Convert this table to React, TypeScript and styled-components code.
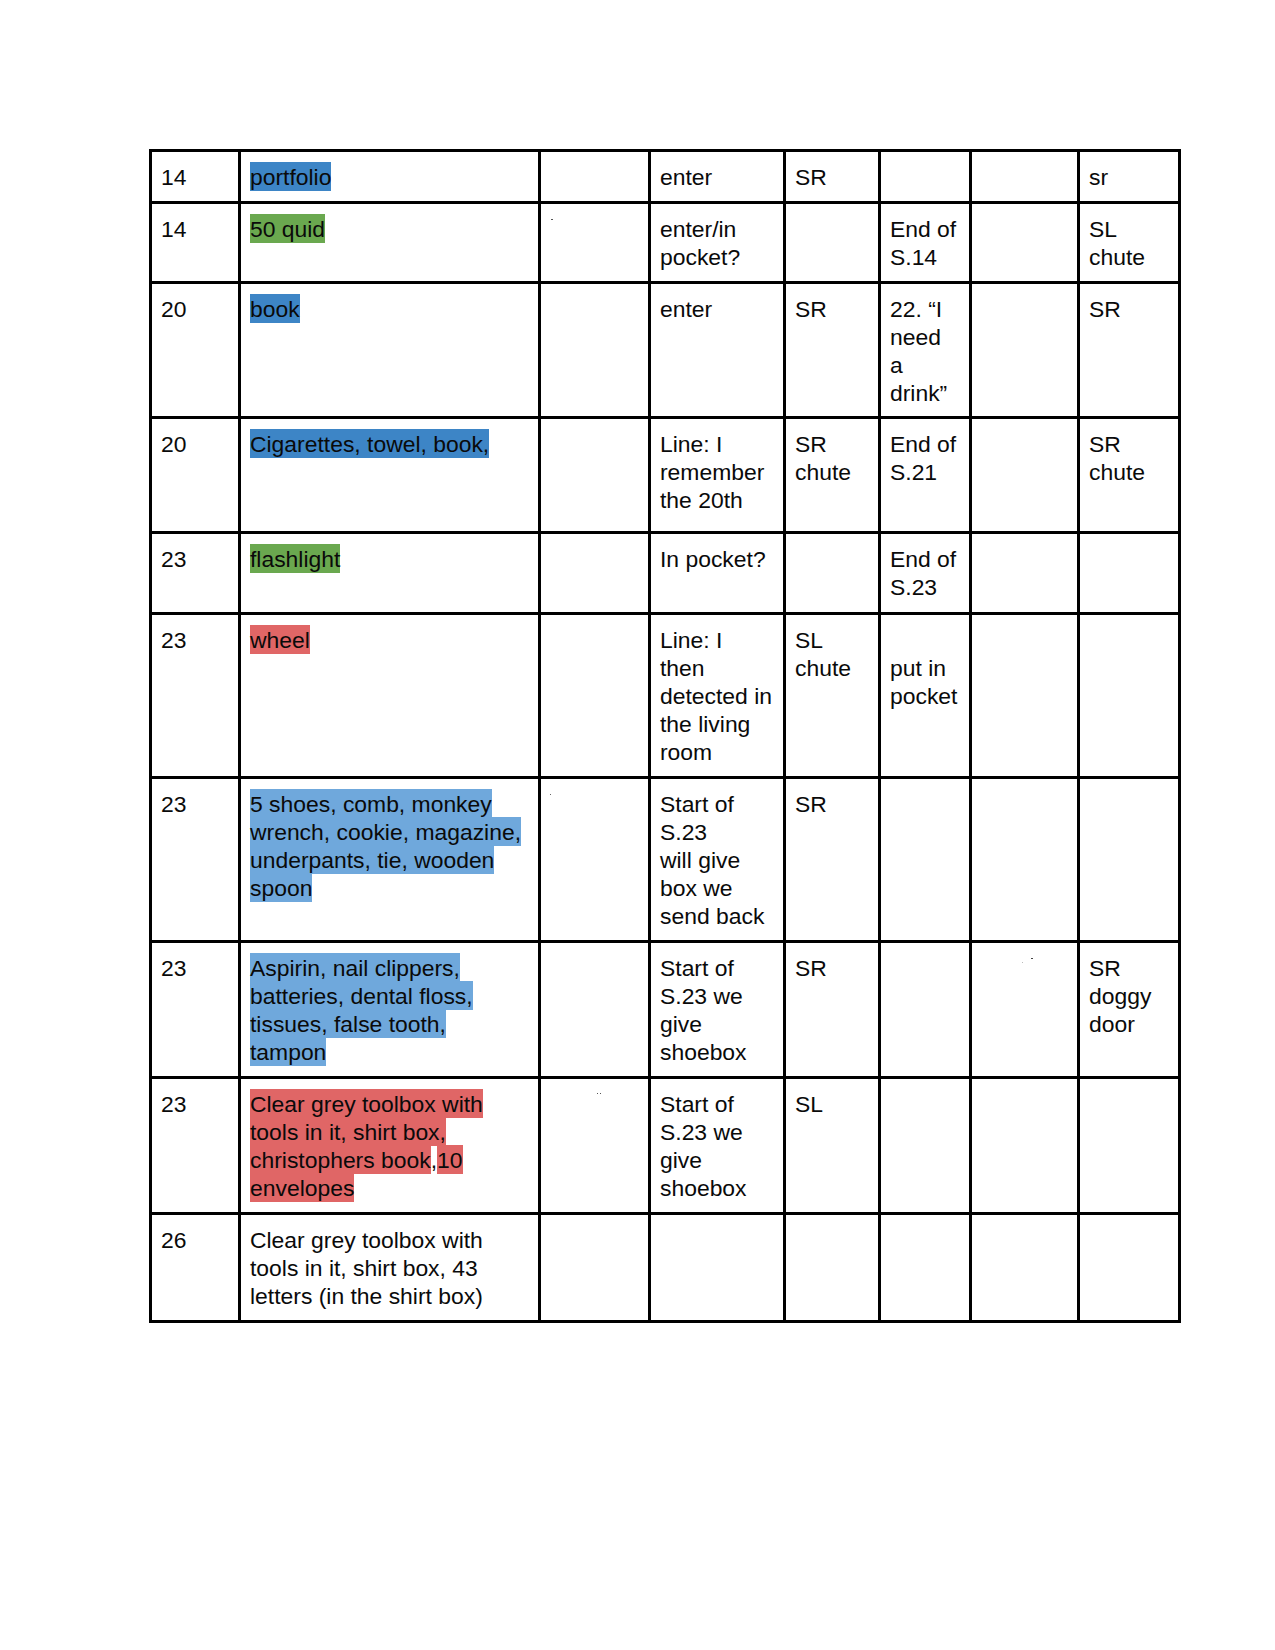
import React from "react";
import styled, { createGlobalStyle } from "styled-components";

const GlobalStyle = createGlobalStyle`
  html, body {
    margin: 0;
    padding: 0;
    background: #ffffff;
  }
  body {
    font-family: "Liberation Sans", Arial, sans-serif;
    color: #0a0a0a;
  }
`;

type Tone = "blue" | "lightBlue" | "green" | "red";

const toneColors: Record<Tone, string> = {
  blue: "#3d85c6",
  lightBlue: "#6fa8dc",
  green: "#6aa84f",
  red: "#e06666",
};

type Segment = { text: string; tone?: Tone };
type Line = Segment[];
type Cell = Line[];
type Speck = { left: number; top: number; width: number; shade: string };
type Row = { height: number; cells: Cell[]; specks?: Record<number, Speck[]> };

const Page = styled.div`
  padding: 149px 0 0 149px;
  min-height: 1650px;
  box-sizing: border-box;
`;

const Sheet = styled.table`
  border-collapse: collapse;
  table-layout: fixed;
  width: 1032px;
  font-size: 22.9px;
  line-height: 28px;
`;

const Col = styled.col<{ $w: number }>`
  width: ${(p) => p.$w}px;
`;

const SheetRow = styled.tr<{ $h: number }>`
  height: ${(p) => p.$h}px;
`;

const SheetCell = styled.td`
  position: relative;
  border: 3px solid #000;
  padding: 10.5px 9px 0 9px;
  vertical-align: top;
  white-space: nowrap;
  overflow: visible;
`;

const Mark = styled.span<{ $tone: Tone }>`
  background: ${(p) => toneColors[p.$tone]};
  padding-top: 1.5px;
  padding-bottom: 1px;
`;

const Plain = styled.span``;

const Dot = styled.span<{ $shade: string }>`
  position: absolute;
  height: 1px;
  background: ${(p) => p.$shade};
`;

const t = (text: string, tone?: Tone): Segment => ({ text, tone });
const L = (...segs: Segment[]): Line => segs;
const P = (...lines: string[]): Cell => lines.map((s) => [t(s)]);
const E: Cell = [];

const widths = [89, 300, 110, 135, 95, 91, 108, 101];

const rows: Row[] = [
  {
    height: 52,
    cells: [P("14"), [L(t("portfolio", "blue"))], E, P("enter"), P("SR"), E, E, P("sr")],
  },
  {
    height: 80,
    cells: [
      P("14"),
      [L(t("50 quid", "green"))],
      E,
      P("enter/in", "pocket?"),
      E,
      P("End of", "S.14"),
      E,
      P("SL", "chute"),
    ],
    specks: { 2: [{ left: 10, top: 15, width: 2, shade: "#555" }] },
  },
  {
    height: 135,
    cells: [
      P("20"),
      [L(t("book", "blue"))],
      E,
      P("enter"),
      P("SR"),
      P("22. \u201cI", "need", "a", "drink\u201d"),
      E,
      P("SR"),
    ],
  },
  {
    height: 115,
    cells: [
      P("20"),
      [L(t("Cigarettes, towel, book,", "blue"))],
      E,
      P("Line: I", "remember", "the 20th"),
      P("SR", "chute"),
      P("End of", "S.21"),
      E,
      P("SR", "chute"),
    ],
  },
  {
    height: 81,
    cells: [
      P("23"),
      [L(t("flashlight", "green"))],
      E,
      P("In pocket?"),
      E,
      P("End of", "S.23"),
      E,
      E,
    ],
  },
  {
    height: 164,
    cells: [
      P("23"),
      [L(t("wheel", "red"))],
      E,
      P("Line: I", "then", "detected in", "the living", "room"),
      P("SL", "chute"),
      P("\u00a0", "put in", "pocket"),
      E,
      E,
    ],
  },
  {
    height: 164,
    cells: [
      P("23"),
      [
        L(t("5 shoes, comb, monkey", "lightBlue")),
        L(t("wrench, cookie, magazine,", "lightBlue")),
        L(t("underpants, tie, wooden", "lightBlue")),
        L(t("spoon", "lightBlue")),
      ],
      E,
      P("Start of", "S.23", "will give", "box we", "send back"),
      P("SR"),
      E,
      E,
      E,
    ],
    specks: { 2: [{ left: 9, top: 15, width: 1, shade: "#666" }] },
  },
  {
    height: 136,
    cells: [
      P("23"),
      [
        L(t("Aspirin, nail clippers,", "lightBlue")),
        L(t("batteries, dental floss,", "lightBlue")),
        L(t("tissues, false tooth,", "lightBlue")),
        L(t("tampon", "lightBlue")),
      ],
      E,
      P("Start of", "S.23 we", "give", "shoebox"),
      P("SR"),
      E,
      E,
      P("SR", "doggy", "door"),
    ],
    specks: {
      6: [
        { left: 59, top: 15, width: 2, shade: "#444" },
        { left: 50, top: 19, width: 1, shade: "#bbb" },
      ],
    },
  },
  {
    height: 136,
    cells: [
      P("23"),
      [
        L(t("Clear grey toolbox with", "red")),
        L(t("tools in it, shirt box,", "red")),
        L(t("christophers book", "red"), t(","), t("10", "red")),
        L(t("envelopes", "red")),
      ],
      E,
      P("Start of", "S.23 we", "give", "shoebox"),
      P("SL"),
      E,
      E,
      E,
    ],
    specks: {
      2: [
        { left: 56, top: 14, width: 1, shade: "#555" },
        { left: 59, top: 14, width: 1, shade: "#555" },
      ],
    },
  },
  {
    height: 108,
    cells: [
      P("26"),
      P("Clear grey toolbox with", "tools in it, shirt box, 43", "letters (in the shirt box)"),
      E,
      E,
      E,
      E,
      E,
      E,
    ],
  },
];

function CellContent({ cell }: { cell: Cell }) {
  return (
    <>
      {cell.map((line, li) => (
        <React.Fragment key={li}>
          {li > 0 && <br />}
          {line.map((seg, si) =>
            seg.tone ? (
              <Mark key={si} $tone={seg.tone}>
                {seg.text}
              </Mark>
            ) : (
              <Plain key={si}>{seg.text}</Plain>
            )
          )}
        </React.Fragment>
      ))}
    </>
  );
}

export default function App() {
  return (
    <>
      <GlobalStyle />
      <Page>
        <Sheet>
          <colgroup>
            {widths.map((w, i) => (
              <Col key={i} $w={w} />
            ))}
          </colgroup>
          <tbody>
            {rows.map((row, ri) => (
              <SheetRow key={ri} $h={row.height}>
                {row.cells.map((cell, ci) => (
                  <SheetCell key={ci}>
                    <CellContent cell={cell} />
                    {row.specks?.[ci]?.map((s, k) => (
                      <Dot
                        key={k}
                        $shade={s.shade}
                        style={{ left: s.left, top: s.top, width: s.width }}
                      />
                    ))}
                  </SheetCell>
                ))}
              </SheetRow>
            ))}
          </tbody>
        </Sheet>
      </Page>
    </>
  );
}
